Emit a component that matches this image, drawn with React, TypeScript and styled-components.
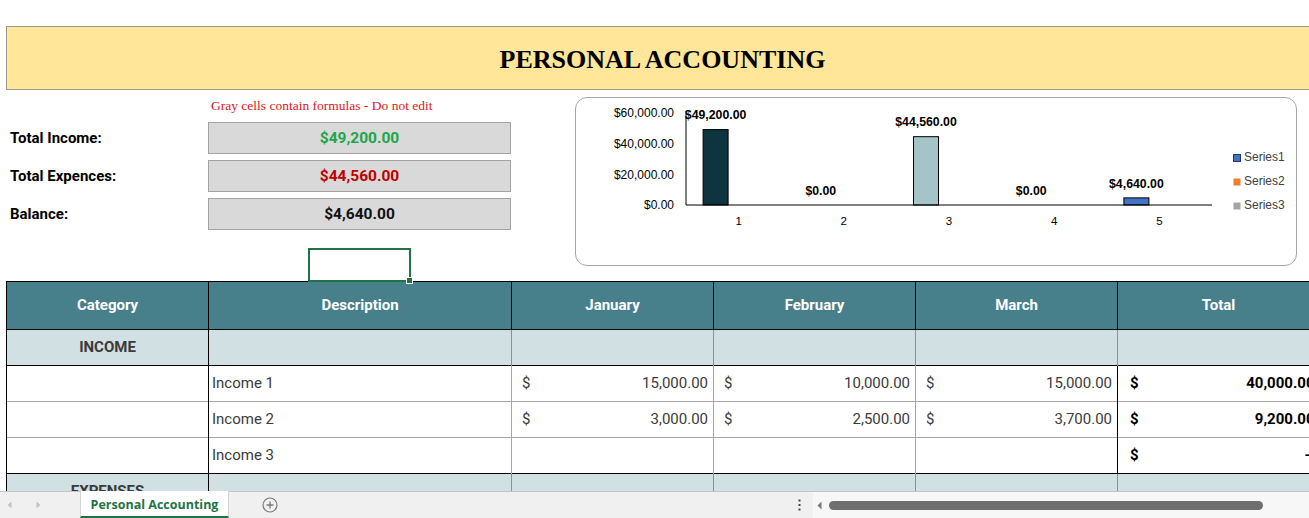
import React from "react";
import styled, { createGlobalStyle } from "styled-components";

const GlobalStyle = createGlobalStyle`
  html, body {
    margin: 0;
    padding: 0;
    height: 100%;
    overflow: hidden;
    background: #ffffff;
  }
  #root {
    height: 100%;
  }
`;

const Window = styled.div`
  display: flex;
  flex-direction: column;
  height: 100vh;
  font-family: Roboto, "Liberation Sans", sans-serif;
`;

const Sheet = styled.main`
  flex: 1;
  min-height: 0;
  overflow: hidden;
  padding-top: 26px;
`;

const Banner = styled.header`
  margin-left: 6px;
  width: 1313px;
  height: 64px;
  box-sizing: border-box;
  border: 1px solid #9d9a88;
  background: #ffe699;
  display: flex;
  align-items: center;
  justify-content: center;
`;

const Title = styled.h1`
  margin: 0;
  padding-top: 4px;
  font-family: "Liberation Serif", "DejaVu Serif", serif;
  font-weight: 700;
  font-size: 26px;
  color: #000;
`;

const Overview = styled.section`
  position: relative;
  display: flex;
  align-items: flex-start;
  height: 191px;
`;

const Summary = styled.div`
  margin-left: 6px;
  width: 505px;
  display: grid;
  grid-template-columns: 202px 303px;
  grid-template-rows: 26px repeat(3, 32px);
  row-gap: 6px;
  align-items: center;
`;

const Note = styled.div`
  grid-column: 2;
  align-self: start;
  margin-top: 8px;
  padding-left: 3px;
  line-height: 16px;
  font-family: "Liberation Serif", "DejaVu Serif", serif;
  font-size: 13.5px;
  color: #e0161b;
`;

const SummaryLabel = styled.div`
  padding-left: 4px;
  font-weight: 700;
  font-size: 15px;
  color: #000;
`;

const SummaryValue = styled.div<{ $tone: string }>`
  height: 32px;
  box-sizing: border-box;
  border: 1px solid #a3a3a3;
  background: #d9d9d9;
  display: flex;
  align-items: center;
  justify-content: center;
  font-weight: 700;
  font-size: 15.5px;
  color: ${(p) => p.$tone};
`;

const ChartCard = styled.div`
  margin-left: 64px;
  margin-top: 7px;
  width: 722px;
  height: 169px;
  box-sizing: border-box;
  border: 1px solid #a6a6a6;
  border-radius: 12px;
  background: #fff;
  overflow: hidden;
`;

const ChartSvg = styled.svg`
  display: block;
  font-family: "Liberation Sans", Arial, sans-serif;
`;

const Selection = styled.div`
  position: absolute;
  left: 308px;
  top: 158px;
  width: 103px;
  height: 34px;
  box-sizing: border-box;
  border: 2px solid #217346;
  z-index: 2;

  &::after {
    content: "";
    position: absolute;
    right: -4px;
    bottom: -4px;
    width: 5px;
    height: 5px;
    background: #217346;
    border: 1px solid #fff;
  }
`;

const Grid = styled.table`
  margin-left: 6px;
  width: 1313px;
  border-collapse: collapse;
  table-layout: fixed;
  font-size: 15px;
`;

const HeadRow = styled.tr`
  height: 48px;
`;

const HeadCell = styled.th`
  padding: 0 0 2px;
  background: #47808b;
  color: #fff;
  font-weight: 700;
  font-size: 15px;
  text-align: center;
  border: 1px solid #000;
`;

const SectionRow = styled.tr`
  height: 36px;
  background: #d0e0e3;
  border-top: 1px solid #000;
  border-bottom: 1px solid #000;
`;

const SectionCell = styled.td<{ $strong?: boolean }>`
  padding: 0 0 2px;
  text-align: center;
  font-weight: 700;
  color: #3a3a3a;
  border-left: 1px solid ${(p) => (p.$strong ? "#000" : "#8f8f8f")};
`;

const DataRow = styled.tr<{ $last?: boolean }>`
  height: 36px;
  border-bottom: 1px solid ${(p) => (p.$last ? "#000" : "#a6a6a6")};
`;

const DataCell = styled.td<{ $strong?: boolean }>`
  padding: 0 0 2px 3px;
  color: #3b3b3b;
  border-left: 1px solid ${(p) => (p.$strong ? "#000" : "#a6a6a6")};
  white-space: nowrap;
`;

const MoneyCell = styled.td<{ $total?: boolean }>`
  padding: 0 5px 2px ${(p) => (p.$total ? "12px" : "10px")};
  border-left: 1px solid ${(p) => (p.$total ? "#000" : "#a6a6a6")};
  color: ${(p) => (p.$total ? "#000" : "#3b3b3b")};
  font-weight: ${(p) => (p.$total ? 700 : 400)};
  white-space: nowrap;
`;

const Money = styled.div`
  display: flex;
  justify-content: space-between;
`;

const Dash = styled.span`
  padding-right: 4px;
`;

const TabBar = styled.footer`
  flex: none;
  height: 27px;
  box-sizing: border-box;
  border-top: 1px solid #c6c6c6;
  background: #f0f0f0;
  display: flex;
  align-items: stretch;
  font-family: "Open Sans", "Liberation Sans", sans-serif;
`;

const SheetNav = styled.div`
  width: 80px;
  display: flex;
  align-items: center;
  gap: 24px;
  padding-left: 7px;
  box-sizing: border-box;
`;

const SheetTab = styled.div`
  width: 149px;
  margin-top: -1px;
  padding-top: 2px;
  box-sizing: border-box;
  background: #fff;
  border-left: 1px solid #d4d4d4;
  border-right: 1px solid #d4d4d4;
  border-bottom: 2px solid #217346;
  display: flex;
  align-items: center;
  justify-content: center;
  font-weight: 700;
  font-size: 12.5px;
  color: #217346;
`;

const AddSheet = styled.div`
  width: 82px;
  display: flex;
  align-items: center;
  justify-content: center;
`;

const Spacer = styled.div`
  flex: 1;
  display: flex;
  align-items: center;
  justify-content: flex-end;
  padding-right: 12px;
`;

const ScrollArea = styled.div`
  width: 496px;
  display: flex;
  align-items: center;
  gap: 7px;
  background: #f7f7f7;
  padding-left: 4px;
  box-sizing: border-box;
`;

const Thumb = styled.div`
  width: 434px;
  height: 9px;
  border-radius: 5px;
  background: #6f6f6f;
`;

type Bar = { value: number; label: string; fill: string };

const series: Bar[] = [
  { value: 49200, label: "$49,200.00", fill: "#0e3440" },
  { value: 0, label: "$0.00", fill: "#d0e0e3" },
  { value: 44560, label: "$44,560.00", fill: "#a5c4c7" },
  { value: 0, label: "$0.00", fill: "#47808b" },
  { value: 4640, label: "$4,640.00", fill: "#4472c4" },
];

const legend = [
  { name: "Series1", fill: "#4472c4", stroke: "#1f3864" },
  { name: "Series2", fill: "#ed7d31", stroke: "none" },
  { name: "Series3", fill: "#a5a5a5", stroke: "none" },
];

function SummaryChart() {
  const left = 110;
  const right = 636;
  const base = 107;
  const top = 15;
  const max = 60000;
  const step = (right - left) / series.length;
  const scale = (base - top) / max;
  const ticks = [60000, 40000, 20000, 0];
  const tickText = ["$60,000.00", "$40,000.00", "$20,000.00", "$0.00"];

  return (
    <ChartSvg width={720} height={167} viewBox="0 0 720 167">
      {ticks.map((t, i) => (
        <text
          key={t}
          x={98}
          y={base - t * scale + 1}
          textAnchor="end"
          dominantBaseline="middle"
          fontSize={12}
          fill="#000"
        >
          {tickText[i]}
        </text>
      ))}
      {series.map((b, i) => {
        const catCenter = left + step * (i + 0.5);
        const cx = catCenter - 23;
        const h = b.value * scale;
        return (
          <g key={i}>
            {h > 0 && (
              <rect
                x={cx - 12.5}
                y={base - h}
                width={25}
                height={h}
                fill={b.fill}
                stroke="#000"
                strokeWidth={1}
              />
            )}
            <text
              x={cx}
              y={base - h - 13.5}
              textAnchor="middle"
              dominantBaseline="middle"
              fontSize={12.3}
              fontWeight={700}
              fill="#000"
            >
              {b.label}
            </text>
            <text
              x={catCenter}
              y={124}
              textAnchor="middle"
              dominantBaseline="middle"
              fontSize={11.5}
              fill="#000"
            >
              {i + 1}
            </text>
          </g>
        );
      })}
      <line x1={left} y1={top + 1} x2={left} y2={base} stroke="#000" strokeWidth={1} />
      <line x1={left} y1={base} x2={right} y2={base} stroke="#000" strokeWidth={1} />
      {legend.map((l, i) => (
        <g key={l.name}>
          <rect
            x={657.5}
            y={56.5 + i * 24}
            width={7}
            height={7}
            fill={l.fill}
            stroke={l.stroke}
            strokeWidth={1}
          />
          <text x={668} y={60 + i * 24} dominantBaseline="middle" fontSize={12} fill="#404040">
            {l.name}
          </text>
        </g>
      ))}
    </ChartSvg>
  );
}

type Line = { desc: string; jan?: string; feb?: string; mar?: string; total: string };

const income: Line[] = [
  { desc: "Income 1", jan: "15,000.00", feb: "10,000.00", mar: "15,000.00", total: "40,000.00" },
  { desc: "Income 2", jan: "3,000.00", feb: "2,500.00", mar: "3,700.00", total: "9,200.00" },
  { desc: "Income 3", total: "-" },
];

function Amount({ value, total }: { value?: string; total?: boolean }) {
  return (
    <MoneyCell $total={total}>
      {value !== undefined && (
        <Money>
          <span>$</span>
          {value === "-" ? <Dash>-</Dash> : <span>{value}</span>}
        </Money>
      )}
    </MoneyCell>
  );
}

function SectionLine({ title }: { title: string }) {
  return (
    <SectionRow>
      <SectionCell $strong>{title}</SectionCell>
      <SectionCell $strong />
      <SectionCell />
      <SectionCell />
      <SectionCell />
      <SectionCell />
    </SectionRow>
  );
}

const ArrowLeft = () => (
  <svg width="5" height="8" viewBox="0 0 5 8">
    <path d="M4.5 0.5 L0.5 4 L4.5 7.5 Z" fill="#c3c3c3" />
  </svg>
);

const ArrowRight = () => (
  <svg width="5" height="8" viewBox="0 0 5 8">
    <path d="M0.5 0.5 L4.5 4 L0.5 7.5 Z" fill="#c3c3c3" />
  </svg>
);

const PlusCircle = () => (
  <svg width="16" height="16" viewBox="0 0 16 16">
    <circle cx="8" cy="8" r="7" fill="none" stroke="#7b7b7b" strokeWidth="1.2" />
    <path d="M8 4.5 V11.5 M4.5 8 H11.5" stroke="#7b7b7b" strokeWidth="1.3" />
  </svg>
);

const MoreDots = () => (
  <svg width="3" height="12" viewBox="0 0 3 12">
    <rect x="0.5" y="0.5" width="2" height="2" fill="#444" />
    <rect x="0.5" y="5" width="2" height="2" fill="#444" />
    <rect x="0.5" y="9.5" width="2" height="2" fill="#444" />
  </svg>
);

const ScrollLeft = () => (
  <svg width="5" height="9" viewBox="0 0 5 9">
    <path d="M4.5 0.5 L0.5 4.5 L4.5 8.5 Z" fill="#7a7a7a" />
  </svg>
);

export default function App() {
  return (
    <Window>
      <GlobalStyle />
      <Sheet>
        <Banner>
          <Title>PERSONAL ACCOUNTING</Title>
        </Banner>
        <Overview>
          <Summary>
            <Note>Gray cells contain formulas - Do not edit</Note>
            <SummaryLabel>Total Income:</SummaryLabel>
            <SummaryValue $tone="#1ea64b">$49,200.00</SummaryValue>
            <SummaryLabel>Total Expences:</SummaryLabel>
            <SummaryValue $tone="#c00000">$44,560.00</SummaryValue>
            <SummaryLabel>Balance:</SummaryLabel>
            <SummaryValue $tone="#111">$4,640.00</SummaryValue>
          </Summary>
          <ChartCard>
            <SummaryChart />
          </ChartCard>
          <Selection />
        </Overview>
        <Grid>
          <colgroup>
            <col style={{ width: 202 }} />
            <col style={{ width: 303 }} />
            <col style={{ width: 202 }} />
            <col style={{ width: 202 }} />
            <col style={{ width: 202 }} />
            <col style={{ width: 202 }} />
          </colgroup>
          <thead>
            <HeadRow>
              <HeadCell>Category</HeadCell>
              <HeadCell>Description</HeadCell>
              <HeadCell>January</HeadCell>
              <HeadCell>February</HeadCell>
              <HeadCell>March</HeadCell>
              <HeadCell>Total</HeadCell>
            </HeadRow>
          </thead>
          <tbody>
            <SectionLine title="INCOME" />
            {income.map((row, i) => (
              <DataRow key={row.desc} $last={i === income.length - 1}>
                <DataCell $strong />
                <DataCell $strong>{row.desc}</DataCell>
                <Amount value={row.jan} />
                <Amount value={row.feb} />
                <Amount value={row.mar} />
                <Amount value={row.total} total />
              </DataRow>
            ))}
            <SectionLine title="EXPENSES" />
          </tbody>
        </Grid>
      </Sheet>
      <TabBar>
        <SheetNav>
          <ArrowLeft />
          <ArrowRight />
        </SheetNav>
        <SheetTab>Personal Accounting</SheetTab>
        <AddSheet>
          <PlusCircle />
        </AddSheet>
        <Spacer>
          <MoreDots />
        </Spacer>
        <ScrollArea>
          <ScrollLeft />
          <Thumb />
        </ScrollArea>
      </TabBar>
    </Window>
  );
}
